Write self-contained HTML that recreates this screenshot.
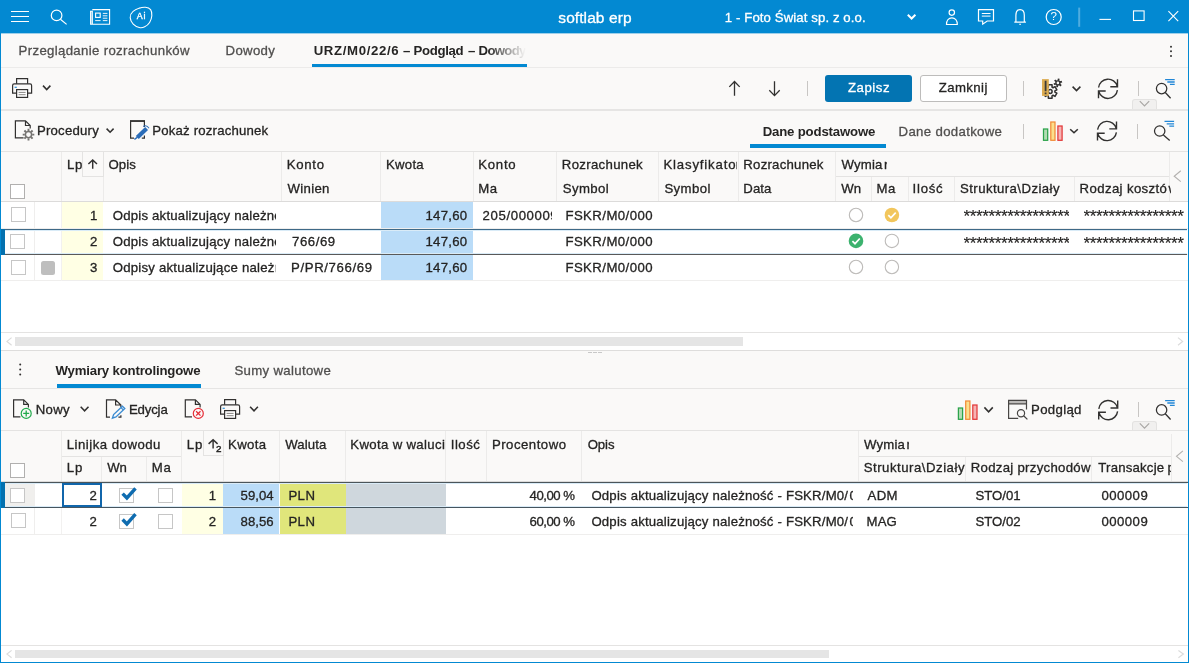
<!DOCTYPE html>
<html><head><meta charset="utf-8"><title>softlab erp</title>
<style>
html,body{margin:0;padding:0;background:#fff;}
body{width:1189px;height:663px;overflow:hidden;position:relative;font-family:"Liberation Sans",sans-serif;}
#app{will-change:transform;position:absolute;left:0;top:0;width:1189px;height:663px;overflow:hidden;background:#fff;}
.t{position:absolute;white-space:pre;line-height:1;font-size:14px;color:#1f1e1d;}
.b{position:absolute;}
.hl{position:absolute;height:1px;background:#e4e3e2;}
.vl{position:absolute;width:1px;background:#ecebea;}
.cb{position:absolute;width:13px;height:13px;border:1px solid #c6c6c6;background:#fff;box-sizing:content-box;}
svg{position:absolute;overflow:visible;}
.sep{position:absolute;width:1px;background:#c8c6c4;}
</style></head><body><div id="app">

<!-- ===== window frame / backgrounds ===== -->
<div class="b" style="left:0;top:0;width:1189px;height:33px;background:#0389d2;"></div>
<div class="b" style="left:1px;top:33px;width:1187px;height:118px;background:#faf9f8;"></div>
<div class="hl" style="left:1px;top:33px;width:1187px;background:#9fd0ea;"></div>
<div class="hl" style="left:1px;top:67px;width:1187px;background:#ecebea;"></div>
<div class="hl" style="left:1px;top:109px;width:1187px;height:2px;background:#e6e5e4;"></div>

<!-- main tab underline -->
<div class="b" style="left:312px;top:64px;width:215px;height:3px;background:#0389d2;"></div>
<!-- fade over active tab text -->
<div class="b" style="left:487px;top:40px;width:41px;height:23px;background:linear-gradient(90deg,rgba(250,249,248,0),#faf9f8 95%);z-index:5;"></div>

<!-- toolbar1 buttons -->
<div class="b" style="left:825px;top:75px;width:87px;height:27px;background:#0374b2;border-radius:3px;"></div>
<div class="b" style="left:920px;top:75px;width:85px;height:25px;background:#fff;border:1px solid #bdbcbb;border-radius:3px;"></div>
<div class="sep" style="left:807px;top:81px;height:15px;"></div>
<div class="sep" style="left:1023px;top:81px;height:15px;"></div>
<div class="sep" style="left:1138px;top:81px;height:15px;"></div>
<!-- small collapse widget -->
<div class="b" style="left:1132px;top:99px;width:23px;height:9px;background:#f1f0ef;border:1px solid #e3e2e1;border-bottom:none;border-radius:3px 3px 0 0;"></div>

<!-- toolbar2 -->
<div class="b" style="left:750px;top:144px;width:136px;height:4px;background:#0389d2;"></div>
<div class="sep" style="left:1023px;top:124px;height:15px;"></div>
<div class="sep" style="left:1137px;top:124px;height:15px;"></div>

<!-- ===== GRID 1 ===== -->
<div class="b" style="left:1px;top:151px;width:1187px;height:51px;background:#faf9f8;"></div>
<div class="hl" style="left:1px;top:151px;width:1187px;"></div>
<div class="hl" style="left:1px;top:201px;width:1187px;background:#dcdbda;"></div>
<div class="hl" style="left:835px;top:176px;width:335px;"></div>
<!-- header col separators -->
<div class="vl" style="left:61px;top:152px;height:49px;"></div>
<div class="vl" style="left:103px;top:152px;height:49px;"></div>
<div class="vl" style="left:281px;top:152px;height:49px;"></div>
<div class="vl" style="left:380px;top:152px;height:49px;"></div>
<div class="vl" style="left:473px;top:152px;height:49px;"></div>
<div class="vl" style="left:556px;top:152px;height:49px;"></div>
<div class="vl" style="left:658px;top:152px;height:49px;"></div>
<div class="vl" style="left:738px;top:152px;height:49px;"></div>
<div class="vl" style="left:835px;top:152px;height:49px;"></div>
<div class="vl" style="left:871px;top:177px;height:24px;"></div>
<div class="vl" style="left:908px;top:177px;height:24px;"></div>
<div class="vl" style="left:954px;top:177px;height:24px;"></div>
<div class="vl" style="left:1074px;top:177px;height:24px;"></div>
<div class="vl" style="left:1169px;top:152px;height:49px;"></div>
<!-- Lp sort box -->
<div class="b" style="left:82px;top:152px;width:20px;height:24px;border:1px solid #e4e3e2;border-top:none;background:#faf9f8;"></div>
<!-- rows -->
<div class="b" style="left:62px;top:202px;width:41px;height:79px;background:#ffffe4;"></div>
<div class="b" style="left:381px;top:202px;width:92px;height:79px;background:#badcf8;"></div>
<div class="hl" style="left:1px;top:228px;width:1187px;background:#efeeed;"></div>
<div class="hl" style="left:1px;top:254px;width:1187px;background:#efeeed;"></div>
<div class="hl" style="left:1px;top:280px;width:1187px;background:#efeeed;"></div>
<div class="vl" style="left:34px;top:202px;height:79px;background:#efeeed;"></div>
<div class="vl" style="left:61px;top:202px;height:79px;background:#f2f1f0;"></div>
<!-- selected row 2 -->
<div class="hl" style="left:1px;top:229px;width:1186px;background:#3e6987;"></div>
<div class="hl" style="left:5px;top:230px;width:1182px;background:#d9ebf7;"></div>
<div class="hl" style="left:5px;top:253px;width:1182px;background:#d9ebf7;"></div>
<div class="hl" style="left:1px;top:254px;width:1186px;background:#595959;"></div>
<div class="b" style="left:1px;top:229px;width:4px;height:26px;background:#0471af;"></div>
<!-- checkboxes -->
<div class="cb" style="left:10px;top:184px;border-color:#b1b0af;"></div>
<div class="cb" style="left:11px;top:207px;"></div>
<div class="cb" style="left:10px;top:234px;"></div>
<div class="cb" style="left:11px;top:260px;"></div>
<div class="b" style="left:41px;top:261px;width:14px;height:14px;background:#bebebe;border-radius:2.5px;"></div>
<!-- right fixed panel -->
<div class="b" style="left:1171px;top:152px;width:17px;height:49px;background:#faf9f8;"></div>
<!-- scrollbar 1 -->
<div class="hl" style="left:1px;top:332px;width:1187px;"></div>
<div class="b" style="left:15px;top:337px;width:728px;height:9px;background:#e5e5e5;"></div>
<div class="hl" style="left:1px;top:350px;width:1187px;background:#dedddc;"></div>

<!-- ===== lower panel ===== -->
<div class="b" style="left:1px;top:351px;width:1187px;height:131px;background:#faf9f8;"></div>
<div class="hl" style="left:1px;top:388px;width:1187px;background:#e6e5e4;"></div>
<div class="b" style="left:57px;top:384px;width:144px;height:4px;background:#0389d2;"></div>
<div class="b" style="left:588px;top:352px;width:4px;height:1px;background:#c8c8c8;"></div>
<div class="b" style="left:593px;top:352px;width:4px;height:1px;background:#c8c8c8;"></div>
<div class="b" style="left:598px;top:352px;width:4px;height:1px;background:#c8c8c8;"></div>
<div class="sep" style="left:1138px;top:402px;height:15px;"></div>
<div class="b" style="left:1132px;top:421px;width:23px;height:8px;background:#f1f0ef;border:1px solid #e3e2e1;border-bottom:none;border-radius:3px 3px 0 0;"></div>

<!-- ===== GRID 2 ===== -->
<div class="hl" style="left:1px;top:430px;width:1187px;"></div>
<div class="hl" style="left:1px;top:481px;width:1187px;background:#dcdbda;"></div>
<div class="hl" style="left:62px;top:456px;width:120px;"></div>
<div class="hl" style="left:859px;top:456px;width:312px;"></div>
<div class="vl" style="left:61px;top:431px;height:50px;"></div>
<div class="vl" style="left:101px;top:457px;height:24px;"></div>
<div class="vl" style="left:146px;top:457px;height:24px;"></div>
<div class="vl" style="left:181px;top:431px;height:50px;"></div>
<div class="vl" style="left:223px;top:431px;height:50px;"></div>
<div class="vl" style="left:279px;top:431px;height:50px;"></div>
<div class="vl" style="left:345px;top:431px;height:50px;"></div>
<div class="vl" style="left:445px;top:431px;height:50px;"></div>
<div class="vl" style="left:486px;top:431px;height:50px;"></div>
<div class="vl" style="left:581px;top:431px;height:50px;"></div>
<div class="vl" style="left:858px;top:431px;height:50px;"></div>
<div class="vl" style="left:965px;top:457px;height:24px;"></div>
<div class="vl" style="left:1091px;top:457px;height:24px;"></div>
<div class="vl" style="left:1171px;top:434px;height:47px;"></div>
<div class="b" style="left:203px;top:431px;width:19px;height:24px;border:1px solid #e4e3e2;border-top:none;background:#faf9f8;"></div>
<!-- rows -->
<div class="b" style="left:182px;top:482px;width:41px;height:52px;background:#ffffe4;"></div>
<div class="b" style="left:223px;top:482px;width:56px;height:52px;background:#badcf8;"></div>
<div class="b" style="left:280px;top:482px;width:66px;height:52px;background:#e0e67b;"></div>
<div class="b" style="left:346px;top:482px;width:100px;height:52px;background:#cfd7dd;"></div>
<div class="b" style="left:5px;top:483px;width:29px;height:24px;background:#f0efed;"></div>
<div class="hl" style="left:1px;top:534px;width:1187px;background:#efeeed;"></div>
<div class="vl" style="left:34px;top:482px;height:52px;background:#efeeed;"></div>
<div class="vl" style="left:61px;top:508px;height:26px;background:#f2f1f0;"></div>
<div class="hl" style="left:1px;top:482px;width:1187px;background:#4b555a;"></div>
<div class="hl" style="left:5px;top:483px;width:1182px;background:#d9ebf7;"></div>
<div class="hl" style="left:5px;top:506px;width:1182px;background:#d9ebf7;"></div>
<div class="hl" style="left:1px;top:507px;width:1187px;background:#46555f;"></div>
<div class="b" style="left:1px;top:482px;width:4px;height:26px;background:#0471af;"></div>
<div class="b" style="left:62px;top:483px;width:36px;height:20px;border:2px solid #1166ab;background:#fff;"></div>
<div class="cb" style="left:10px;top:463px;border-color:#b1b0af;"></div>
<div class="cb" style="left:10px;top:488px;"></div>
<div class="cb" style="left:11px;top:513px;"></div>
<div class="cb" style="left:119px;top:488px;"></div>
<div class="cb" style="left:119px;top:514px;"></div>
<div class="cb" style="left:158px;top:488px;"></div>
<div class="cb" style="left:158px;top:514px;"></div>
<div class="b" style="left:1172px;top:431px;width:16px;height:50px;background:#faf9f8;"></div>
<!-- scrollbar 2 -->
<div class="hl" style="left:1px;top:645px;width:1187px;"></div>
<div class="b" style="left:15px;top:650px;width:814px;height:8px;background:#e5e5e5;"></div>

<!-- ===== title bar icons ===== -->
<svg style="left:0;top:0" width="1189" height="33" viewBox="0 0 1189 33" fill="none" stroke="#fff" stroke-width="1.2">
<!-- hamburger -->
<path d="M11 11.5H29M11 16.5H29M11 21.5H29" stroke-width="1.1"/>
<!-- search -->
<circle cx="56.6" cy="15.4" r="5.3"/><path d="M60.4 19.3L66.6 24.4"/>
<!-- newspaper -->
<path d="M92.3 9.6H109.6V24.2H90.6V11.2H92.3V24.2" stroke-width="1.1"/>
<rect x="95.6" y="13.1" width="4.6" height="4.3" stroke-width="1.1"/>
<path d="M102.8 13.4H107.4M102.8 15.8H107.4M102.8 18.2H107.4M95.2 20.6H100.6M102.8 20.6H107.4" stroke-width="1" stroke-opacity=".9"/><rect x="90.6" y="11.2" width="1.7" height="13" fill="#fff" fill-opacity=".35" stroke="none"/>
<!-- AI -->
<path d="M139.3 8.3C142.8 6.7 148.4 6.6 150.6 9.6C152.7 12.6 152.1 18.6 149.6 22.5C147 26.5 142.6 28.3 139.3 27.5C134.9 26.4 130.5 22.6 130.2 17.6C130 13.3 134 9.7 140.2 7.8" stroke-width="1.1"/>
<!-- company dropdown chevron -->
<path d="M907.8 14.8L911.6 18.5L915.4 14.8" stroke-width="2"/>
<!-- person -->
<circle cx="951.8" cy="12.6" r="2.7"/>
<path d="M946.5 24.5C946.5 20.6 948.7 17.9 951.9 17.9C955.1 17.9 957.3 20.6 957.3 24.5Z"/>
<!-- chat -->
<path d="M978.5 9.6H993.5V21H987.2L982.7 24.2V21H978.5Z"/>
<path d="M981.8 13.5H990.5M981.8 16.1H990.5" stroke-width="1"/>
<!-- bell -->
<path d="M1014.3 22.2H1025.9M1015.9 22.2V15.2C1015.9 11.7 1017.7 9.6 1020.1 9.6C1022.5 9.6 1024.3 11.7 1024.3 15.2V22.2"/>
<path d="M1019.2 24.3H1021"  stroke-width="1.1"/>
<!-- help -->
<circle cx="1053.7" cy="17" r="7.5"/>
<!-- separator -->
<path d="M1079.2 7.6V26.8" stroke="#fff" stroke-opacity=".3" stroke-width="2"/>
<!-- min / max / close -->
<path d="M1099.4 19.4H1111" stroke-width="1.1"/>
<rect x="1133.5" y="10.9" width="10.6" height="9.6" stroke-width="1.1"/>
<path d="M1168.4 11.2L1178.2 21.1M1178.2 11.2L1168.4 21.1" stroke-width="1.1"/>
</svg>
<span class="t" style="left:136.8px;top:12.3px;font-size:8.9px;color:#fff;letter-spacing:0.7px;-webkit-text-stroke:0.35px;">Ai</span>
<span class="t" style="left:1050.6px;top:11.4px;font-size:11.5px;color:#fff;">?</span>

<svg style="left:0;top:68px" width="1189" height="42" viewBox="0 68 1189 42" fill="none">
<path d="M16.6 83.8V78.6H27.6V83.8" stroke="#323130" stroke-width="1.2" fill="none"/><path d="M16.6 93.2H12.6V85.4Q12.6 83.8 14.2 83.8H30Q31.6 83.8 31.6 85.4V93.2H27.6" stroke="#323130" stroke-width="1.2" fill="none"/><rect x="16.6" y="89.6" width="11" height="7.8" stroke="#323130" stroke-width="1.2" fill="#fff"/><path d="M18.6 92.4H25.6M18.6 94.7H25.6" stroke="#8a8886" stroke-width="1" fill="none"/><path d="M14.6 87.3H16.8" stroke="#2f8fd6" stroke-width="1.2" fill="none"/>
<path d="M43 85.6L46.7 89.6L50.4 85.6" stroke="#323130" stroke-width="1.55" fill="none"/>
<path d="M734.5 95.8V81.6M729.3 86.9L734.5 81.5L739.7 86.9" stroke="#323130" stroke-width="1.3"/>
<path d="M774.5 81.3V95.5M769.3 90.2L774.5 95.6L779.7 90.2" stroke="#323130" stroke-width="1.3"/>
<path d="M1048.36 87.18L1048.34 84.85L1052.06 84.85L1052.04 87.18L1053.02 87.74L1055.03 86.57L1056.88 89.79L1054.87 90.93L1054.87 92.07L1056.88 93.21L1055.03 96.43L1053.02 95.26L1052.04 95.82L1052.06 98.15L1048.34 98.15L1048.36 95.82L1047.38 95.26L1045.37 96.43L1043.52 93.21L1045.53 92.07L1045.53 90.93L1043.52 89.79L1045.37 86.57L1047.38 87.74Z" stroke="#323130" stroke-width="1.5" stroke-linejoin="round"/><circle cx="1050.2" cy="91.5" r="1.9" stroke="#323130" stroke-width="1.5"/>
<circle cx="1057.9" cy="82.9" r="2.50" fill="#faf9f8"/><path d="M1058.34 80.74L1058.75 78.69M1059.99 82.20L1061.98 81.53M1059.55 84.36L1061.12 85.75M1057.46 85.06L1057.05 87.11M1055.81 83.60L1053.82 84.27M1056.25 81.44L1054.68 80.05" stroke="#323130" stroke-width="1.8" fill="none"/><circle cx="1057.9" cy="82.9" r="2.0" stroke="#323130" stroke-width="1.4" fill="#faf9f8"/>
<rect x="1042" y="79.1" width="6.8" height="16.8" fill="#dcac52"/>
<path d="M1045.6 80.8V91.2M1045.6 92.5V94.3" stroke="#3b3a39" stroke-width="1.8"/>
<path d="M1072.6 86.6L1076.5 90.6L1080.4 86.6" stroke="#323130" stroke-width="1.55" fill="none"/>
<path d="M1098.6 87.5A9.5 9.5 0 0 1 1117.2 86.2M1117.5 79.3V86.7H1110.3M1117.4 90.1A9.5 9.5 0 0 1 1098.8 91.4M1098.5 98.3V91.0H1105.7" stroke="#323130" stroke-width="1.4" fill="none"/>
<circle cx="1161.6" cy="88.6" r="5.2" stroke="#323130" stroke-width="1.25" fill="none"/><path d="M1165.3 92.5L1170.6 98.3" stroke="#323130" stroke-width="1.3" fill="none"/><path d="M1165.1 79.6H1174.7M1167.3 82.0H1174.7M1169.9 84.4H1174.7" stroke="#2287d6" stroke-width="1.3" fill="none"/>
<path d="M1139.8 101.2L1144.5 106L1149.2 101.2" stroke="#a9a7a5" stroke-width="1.2" fill="none"/>
</svg>
<svg style="left:1165px;top:40px" width="12" height="22" viewBox="1165 40 12 22"><circle cx="1171" cy="46.7" r="1" fill="#323130"/><circle cx="1171" cy="51.3" r="1" fill="#323130"/><circle cx="1171" cy="55.9" r="1" fill="#323130"/></svg>

<svg style="left:0;top:111px" width="1189" height="40" viewBox="0 111 1189 40" fill="none">
<path d="M23.6 137.9H15.4V120.9H25.5L30.2 125.5V128.6M25.5 120.9V125.5H30.2" stroke="#323130" stroke-width="1.2" fill="none"/>
<circle cx="28.5" cy="134.6" r="4.00" fill="#faf9f8"/><path d="M28.50 130.90L28.50 128.80M31.12 131.98L32.60 130.50M32.20 134.60L34.30 134.60M31.12 137.22L32.60 138.70M28.50 138.30L28.50 140.40M25.88 137.22L24.40 138.70M24.80 134.60L22.70 134.60M25.88 131.98L24.40 130.50" stroke="#757371" stroke-width="1.9" fill="none"/><circle cx="28.5" cy="134.6" r="3.1" stroke="#757371" stroke-width="1.5" fill="#faf9f8"/>
<path d="M106.6 128.6L110.1 132.2L113.6 128.6" stroke="#323130" stroke-width="1.55" fill="none"/>
<path d="M134 138.1H130.6V121.2H144.4V127M144.4 135.4V138.1H141.8" stroke="#323130" stroke-width="1.2"/><path d="M130 121H145" stroke="#323130" stroke-width="1.6"/>
<path d="M137.3 137.4L146.6 128.4" stroke="#2a6cb8" stroke-width="4.2"/><path d="M134.4 139.4L137.6 137.2" stroke="#2a6cb8" stroke-width="1.4"/>
<path d="M143.2 126.4Q146.6 124.6 149 128.2" stroke="#2a6cb8" stroke-width="1.1"/>
<rect x="1043.5" y="129.0" width="4.2" height="11.3" fill="#b3dcb4" stroke="#2ba34a" stroke-width="1.25"/><rect x="1050.8" y="122.0" width="4.2" height="18.3" fill="#fbe08c" stroke="#f28c38" stroke-width="1.25"/><rect x="1057.9" y="126.0" width="4.2" height="14.3" fill="#f6b4b4" stroke="#e23a3a" stroke-width="1.25"/>
<path d="M1070.2 129.2L1074.0 132.8L1077.8 129.2" stroke="#323130" stroke-width="1.55" fill="none"/>
<path d="M1097.6 129.7A9.5 9.5 0 0 1 1116.2 128.4M1116.5 121.5V128.9H1109.3M1116.4 132.3A9.5 9.5 0 0 1 1097.8 133.6M1097.5 140.5V133.2H1104.7" stroke="#323130" stroke-width="1.4" fill="none"/>
<circle cx="1159.7" cy="131" r="5.2" stroke="#323130" stroke-width="1.25" fill="none"/><path d="M1163.4 134.9L1169.7 140.5" stroke="#323130" stroke-width="1.3" fill="none"/><path d="M1164.5 121.4H1174.1M1166.7 123.8H1174.1M1169.3 126.2H1174.1" stroke="#2287d6" stroke-width="1.3" fill="none"/>
</svg>

<svg style="left:0;top:151px" width="1189" height="200" viewBox="0 151 1189 200" fill="none">
<path d="M92.7 168.8V160.2M88.4 164L92.7 159.9L97 164" stroke="#323130" stroke-width="1.45"/>
<path d="M1180.8 170.8L1174.2 176.2L1180.8 181.6" stroke="#b3b1af" stroke-width="1.1"/>
<circle cx="856" cy="215" r="6.7" fill="#fff" stroke="#bdbbb9" stroke-width="1.1"/>
<circle cx="891.9" cy="215" r="7.3" fill="#f2c65c"/><path d="M888.3 215.2L890.9 217.8L895.7 212.6" stroke="#fff" stroke-width="1.7"/>
<circle cx="856" cy="240.9" r="7.3" fill="#3cb26e"/><path d="M852.4 241.1L855.0 243.7L859.8 238.5" stroke="#fff" stroke-width="1.7"/>
<circle cx="891.9" cy="240.9" r="6.7" fill="#fff" stroke="#bdbbb9" stroke-width="1.1"/>
<circle cx="856" cy="267" r="6.7" fill="#fff" stroke="#bdbbb9" stroke-width="1.1"/>
<circle cx="891.9" cy="267" r="6.7" fill="#fff" stroke="#bdbbb9" stroke-width="1.1"/>
<path d="M11.6 337.6L7 341.4L11.6 345.2" stroke="#dcdcdc" stroke-width="1.2"/>
<path d="M1178 337.6L1182.6 341.4L1178 345.2" stroke="#dcdcdc" stroke-width="1.2"/>
</svg>

<svg style="left:0;top:352px" width="1189" height="80" viewBox="0 352 1189 80" fill="none">
<circle cx="20.2" cy="364.6" r="1" fill="#323130"/><circle cx="20.2" cy="369.6" r="1" fill="#323130"/><circle cx="20.2" cy="374.6" r="1" fill="#323130"/>
<path d="M20.4 416.8H13.6V399.8H23.7L28.4 404.4V407.6M23.7 399.8V404.4H28.4" stroke="#323130" stroke-width="1.2" fill="none"/>
<circle cx="26.2" cy="413.4" r="5" stroke="#22aa4c" stroke-width="1.2" fill="#faf9f8"/><path d="M23.2 413.4H29.2M26.2 410.4V416.4" stroke="#22aa4c" stroke-width="1.3"/>
<path d="M80.7 406.8L84.6 410.9L88.5 406.8" stroke="#323130" stroke-width="1.55" fill="none"/>
<path d="M110 417.1H106.5V399.8H115.6L120.9 405V407.2M115.6 399.8V405H120.9M118.4 417.1H120.9V415.2" stroke="#323130" stroke-width="1.2"/>
<path d="M112.4 418.2L113.6 414.6L122.4 406.2L124.8 408.6L116 417Z" stroke="#3c8cd2" stroke-width="1.35" fill="#faf9f8"/><path d="M121 407.6L123.4 410" stroke="#3c8cd2" stroke-width="1.1"/>
<path d="M192.0 416.8H185.3V399.8H195.4L200.1 404.4V407.4M195.4 399.8V404.4H200.1" stroke="#323130" stroke-width="1.2" fill="none"/>
<circle cx="198.3" cy="413.4" r="5" stroke="#e62d37" stroke-width="1.2" fill="#faf9f8"/><path d="M196.1 411.2L200.5 415.6M200.5 411.2L196.1 415.6" stroke="#e62d37" stroke-width="1.3"/>
<path d="M224.6 404.8V399.6H235.6V404.8" stroke="#323130" stroke-width="1.2" fill="none"/><path d="M224.6 414.2H220.6V406.4Q220.6 404.8 222.2 404.8H238Q239.6 404.8 239.6 406.4V414.2H235.6" stroke="#323130" stroke-width="1.2" fill="none"/><rect x="224.6" y="410.6" width="11" height="7.8" stroke="#323130" stroke-width="1.2" fill="#fff"/><path d="M226.6 413.4H233.6M226.6 415.7H233.6" stroke="#8a8886" stroke-width="1" fill="none"/><path d="M222.6 408.3H224.8" stroke="#2f8fd6" stroke-width="1.2" fill="none"/>
<path d="M250.1 406.8L254.0 410.9L257.9 406.8" stroke="#323130" stroke-width="1.55" fill="none"/>
<rect x="958.4" y="408.0" width="4.2" height="11.3" fill="#b3dcb4" stroke="#2ba34a" stroke-width="1.25"/><rect x="965.7" y="401.0" width="4.2" height="18.3" fill="#fbe08c" stroke="#f28c38" stroke-width="1.25"/><rect x="972.8" y="405.0" width="4.2" height="14.3" fill="#f6b4b4" stroke="#e23a3a" stroke-width="1.25"/>
<path d="M984.4 407.4L988.5999999999999 411.9L992.8 407.4" stroke="#323130" stroke-width="1.55" fill="none"/>
<rect x="1008.4" y="400.2" width="18.2" height="3.4" fill="#bdbbb9"/>
<path d="M1018.2 418.3H1008.6V400.4H1026.5V409.4M1008.6 403.8H1026.5" stroke="#484644" stroke-width="1.2"/>
<circle cx="1021" cy="413.2" r="3.6" stroke="#484644" stroke-width="1.2" fill="#faf9f8"/><path d="M1023.6 415.8L1027.4 419.4" stroke="#484644" stroke-width="1.3"/>
<path d="M1098.8 408.8A9.5 9.5 0 0 1 1117.4 407.5M1117.7 400.6V408.0H1110.5M1117.6 411.4A9.5 9.5 0 0 1 1099.0 412.7M1098.7 419.6V412.3H1105.9" stroke="#323130" stroke-width="1.4" fill="none"/>
<circle cx="1161.6" cy="409.9" r="5.2" stroke="#323130" stroke-width="1.25" fill="none"/><path d="M1165.3 413.8L1170.6 419.5" stroke="#323130" stroke-width="1.3" fill="none"/><path d="M1165.1 400.6H1174.7M1167.3 403.0H1174.7M1169.9 405.4H1174.7" stroke="#2287d6" stroke-width="1.3" fill="none"/>
<path d="M1139.8 423.4L1144.5 428.2L1149.2 423.4" stroke="#a9a7a5" stroke-width="1.2" fill="none"/>
</svg>

<svg style="left:0;top:431px" width="1189" height="232" viewBox="0 431 1189 232" fill="none">
<path d="M213.1 448.6V440M208.6 443.9L213.1 439.7L217.6 443.9" stroke="#323130" stroke-width="1.45"/>
<path d="M1182.9 450.9L1176.5 456.3L1182.9 461.7" stroke="#b3b1af" stroke-width="1.1"/>
<path d="M122.6 493.6L126.9 498.0L135.5 488.3" stroke="#0f6cb0" stroke-width="3.4"/>
<path d="M122.6 519.5L126.9 523.9L135.5 514.2" stroke="#0f6cb0" stroke-width="3.4"/>
<path d="M11.6 650.4L7 654.1L11.6 657.8" stroke="#dcdcdc" stroke-width="1.2"/>
<path d="M1178.4 650.4L1183.4 654.1L1178.4 657.8" stroke="#dcdcdc" stroke-width="1.2"/>
</svg>
<span class="t" style="left:215.9px;top:443.9px;font-size:9.8px;color:#1f1e1d;-webkit-text-stroke:0.45px;">2</span>


<span class="t" style="top:9.78px;font-size:15.5px;letter-spacing:0.083px;color:#ffffff;-webkit-text-stroke:0.3px;left:558.30px;">softlab erp</span>
<span class="t" style="top:10.53px;font-size:13.2px;letter-spacing:0.097px;color:#ffffff;-webkit-text-stroke:0.3px;left:724.80px;">1 - Foto Świat sp. z o.o.</span>
<span class="t" style="top:44.43px;font-size:13.2px;letter-spacing:0.341px;color:#504f4e;-webkit-text-stroke:0.3px;left:18.60px;">Przeglądanie rozrachunków</span>
<span class="t" style="top:44.43px;font-size:13.2px;letter-spacing:0.308px;color:#504f4e;-webkit-text-stroke:0.3px;left:225.60px;">Dowody</span>
<span class="t" style="top:44.43px;font-size:13.2px;letter-spacing:0.651px;color:#252423;font-weight:700;left:313.70px;">URZ/M0/22/6</span>
<span class="t" style="top:44.43px;font-size:13.2px;letter-spacing:0px;color:#252423;font-weight:700;left:403.00px;">–</span>
<span class="t" style="top:44.43px;font-size:13.2px;letter-spacing:-0.346px;color:#252423;font-weight:700;left:413.60px;">Podgląd</span>
<span class="t" style="top:44.43px;font-size:13.2px;letter-spacing:0px;color:#252423;font-weight:700;left:468.10px;">–</span>
<span class="t" style="top:44.43px;font-size:13.2px;letter-spacing:-0.693px;color:#252423;font-weight:700;left:478.60px;">Dowody</span>
<span class="t" style="top:81.43px;font-size:13.2px;letter-spacing:0.57px;color:#ffffff;-webkit-text-stroke:0.3px;left:847.90px;">Zapisz</span>
<span class="t" style="top:81.43px;font-size:13.2px;letter-spacing:0.426px;color:#252423;-webkit-text-stroke:0.3px;left:938.70px;">Zamknij</span>
<span class="t" style="top:123.63px;font-size:13.2px;letter-spacing:0.223px;color:#252423;-webkit-text-stroke:0.3px;left:36.90px;">Procedury</span>
<span class="t" style="top:123.63px;font-size:13.2px;letter-spacing:0.194px;color:#252423;-webkit-text-stroke:0.3px;left:152.20px;">Pokaż rozrachunek</span>
<span class="t" style="top:125.23px;font-size:13.2px;letter-spacing:-0.172px;color:#252423;font-weight:700;left:762.70px;">Dane podstawowe</span>
<span class="t" style="top:125.23px;font-size:13.2px;letter-spacing:0.335px;color:#504f4e;-webkit-text-stroke:0.3px;left:898.60px;">Dane dodatkowe</span>
<span class="t" style="top:157.73px;font-size:13.2px;letter-spacing:0.862px;color:#252423;-webkit-text-stroke:0.3px;left:66.90px;">Lp</span>
<span class="t" style="top:157.73px;font-size:13.2px;letter-spacing:0.09px;color:#252423;-webkit-text-stroke:0.3px;left:108.40px;">Opis</span>
<span class="t" style="top:157.73px;font-size:13.2px;letter-spacing:0.716px;color:#252423;-webkit-text-stroke:0.3px;left:286.70px;">Konto</span>
<span class="t" style="top:182.03px;font-size:13.2px;letter-spacing:0.304px;color:#252423;-webkit-text-stroke:0.3px;left:287.60px;">Winien</span>
<span class="t" style="top:157.73px;font-size:13.2px;letter-spacing:0.245px;color:#252423;-webkit-text-stroke:0.3px;left:386.00px;">Kwota</span>
<span class="t" style="top:157.73px;font-size:13.2px;letter-spacing:0.716px;color:#252423;-webkit-text-stroke:0.3px;left:478.30px;">Konto</span>
<span class="t" style="top:182.03px;font-size:13.2px;letter-spacing:0.406px;color:#252423;-webkit-text-stroke:0.3px;left:478.30px;">Ma</span>
<span class="t" style="top:157.73px;font-size:13.2px;letter-spacing:0.319px;color:#252423;-webkit-text-stroke:0.3px;left:561.80px;">Rozrachunek</span>
<span class="t" style="top:182.03px;font-size:13.2px;letter-spacing:0.389px;color:#252423;-webkit-text-stroke:0.3px;left:562.80px;">Symbol</span>
<span class="t" style="top:157.73px;font-size:13.2px;letter-spacing:0.835px;color:#252423;-webkit-text-stroke:0.3px;left:663.40px;">Klasyfikato</span>
<span class="t" style="top:157.73px;font-size:13.2px;letter-spacing:0px;color:#252423;-webkit-text-stroke:0.3px;left:735.70px;width:1.70px;overflow:hidden;padding-bottom:4px;">r</span>
<span class="t" style="top:182.03px;font-size:13.2px;letter-spacing:0.389px;color:#252423;-webkit-text-stroke:0.3px;left:664.40px;">Symbol</span>
<span class="t" style="top:157.73px;font-size:13.2px;letter-spacing:0.239px;color:#252423;-webkit-text-stroke:0.3px;left:743.30px;">Rozrachunek</span>
<span class="t" style="top:182.03px;font-size:13.2px;letter-spacing:0.058px;color:#252423;-webkit-text-stroke:0.3px;left:743.30px;">Data</span>
<span class="t" style="top:157.73px;font-size:13.2px;letter-spacing:0.212px;color:#252423;-webkit-text-stroke:0.3px;left:841.40px;">Wymia</span>
<span class="t" style="top:157.73px;font-size:13.2px;letter-spacing:0px;color:#252423;-webkit-text-stroke:0.3px;left:884.10px;width:2.80px;overflow:hidden;padding-bottom:4px;">r</span>
<span class="t" style="top:182.03px;font-size:13.2px;letter-spacing:0.053px;color:#252423;-webkit-text-stroke:0.3px;left:841.20px;">Wn</span>
<span class="t" style="top:182.03px;font-size:13.2px;letter-spacing:0.506px;color:#252423;-webkit-text-stroke:0.3px;left:876.50px;">Ma</span>
<span class="t" style="top:182.03px;font-size:13.2px;letter-spacing:0.767px;color:#252423;-webkit-text-stroke:0.3px;left:912.50px;">Ilość</span>
<span class="t" style="top:182.03px;font-size:13.2px;letter-spacing:0.428px;color:#252423;-webkit-text-stroke:0.3px;left:960.00px;">Struktura\Działy</span>
<span class="t" style="top:182.03px;font-size:13.2px;letter-spacing:0.376px;color:#252423;-webkit-text-stroke:0.3px;left:1079.60px;">Rodzaj kosztó</span>
<span class="t" style="top:182.03px;font-size:13.2px;letter-spacing:0px;color:#252423;-webkit-text-stroke:0.3px;left:1168.40px;width:2.40px;overflow:hidden;padding-bottom:4px;">w</span>
<span class="t" style="top:208.73px;font-size:13.2px;letter-spacing:0px;color:#252423;-webkit-text-stroke:0.3px;right:1091.77px;">1</span>
<span class="t" style="top:208.73px;font-size:13.2px;letter-spacing:0.278px;color:#252423;-webkit-text-stroke:0.3px;right:721.59px;">147,60</span>
<span class="t" style="top:208.73px;font-size:13.2px;letter-spacing:0.431px;color:#252423;-webkit-text-stroke:0.3px;left:565.40px;width:87.20px;overflow:hidden;padding-bottom:4px;">FSKR/M0/000</span>
<span class="t" style="top:235.43px;font-size:13.2px;letter-spacing:0px;color:#252423;-webkit-text-stroke:0.3px;right:1091.77px;">2</span>
<span class="t" style="top:235.43px;font-size:13.2px;letter-spacing:0.278px;color:#252423;-webkit-text-stroke:0.3px;right:721.59px;">147,60</span>
<span class="t" style="top:235.43px;font-size:13.2px;letter-spacing:0.431px;color:#252423;-webkit-text-stroke:0.3px;left:565.40px;width:87.20px;overflow:hidden;padding-bottom:4px;">FSKR/M0/000</span>
<span class="t" style="top:261.43px;font-size:13.2px;letter-spacing:0px;color:#252423;-webkit-text-stroke:0.3px;right:1091.77px;">3</span>
<span class="t" style="top:261.43px;font-size:13.2px;letter-spacing:0.278px;color:#252423;-webkit-text-stroke:0.3px;right:721.59px;">147,60</span>
<span class="t" style="top:261.43px;font-size:13.2px;letter-spacing:0.431px;color:#252423;-webkit-text-stroke:0.3px;left:565.40px;width:87.20px;overflow:hidden;padding-bottom:4px;">FSKR/M0/000</span>
<span class="t" style="top:208.73px;font-size:13.2px;letter-spacing:0.211px;color:#252423;-webkit-text-stroke:0.3px;left:112.70px;width:163.30px;overflow:hidden;padding-bottom:4px;">Odpis aktualizujący należność</span>
<span class="t" style="top:235.43px;font-size:13.2px;letter-spacing:0.211px;color:#252423;-webkit-text-stroke:0.3px;left:112.70px;width:163.30px;overflow:hidden;padding-bottom:4px;">Odpis aktualizujący należność</span>
<span class="t" style="top:261.43px;font-size:13.2px;letter-spacing:0.218px;color:#252423;-webkit-text-stroke:0.3px;left:112.70px;">Odpisy aktualizujące należ</span>
<span class="t" style="top:261.43px;font-size:13.2px;letter-spacing:0px;color:#252423;-webkit-text-stroke:0.3px;left:274.90px;width:1.30px;overflow:hidden;padding-bottom:4px;">n</span>
<span class="t" style="top:235.43px;font-size:13.2px;letter-spacing:0.558px;color:#252423;-webkit-text-stroke:0.3px;left:292.00px;">766/69</span>
<span class="t" style="top:261.43px;font-size:13.2px;letter-spacing:0.635px;color:#252423;-webkit-text-stroke:0.3px;left:291.00px;">P/PR/766/69</span>
<span class="t" style="top:208.73px;font-size:13.2px;letter-spacing:0.611px;color:#252423;-webkit-text-stroke:0.3px;left:482.60px;">205/00000</span>
<span class="t" style="top:208.73px;font-size:13.2px;letter-spacing:0px;color:#252423;-webkit-text-stroke:0.3px;left:550.30px;width:1.30px;overflow:hidden;padding-bottom:4px;">9</span>
<span class="t" style="top:363.93px;font-size:13.2px;letter-spacing:-0.174px;color:#252423;font-weight:700;left:55.50px;">Wymiary kontrolingowe</span>
<span class="t" style="top:363.93px;font-size:13.2px;letter-spacing:0.323px;color:#504f4e;-webkit-text-stroke:0.3px;left:234.50px;">Sumy walutowe</span>
<span class="t" style="top:402.83px;font-size:13.2px;letter-spacing:0.27px;color:#252423;-webkit-text-stroke:0.3px;left:35.80px;">Nowy</span>
<span class="t" style="top:402.83px;font-size:13.2px;letter-spacing:-0.152px;color:#252423;-webkit-text-stroke:0.3px;left:128.90px;">Edycja</span>
<span class="t" style="top:402.83px;font-size:13.2px;letter-spacing:0.321px;color:#252423;-webkit-text-stroke:0.3px;left:1031.10px;">Podgląd</span>
<span class="t" style="top:437.63px;font-size:13.2px;letter-spacing:0.499px;color:#252423;-webkit-text-stroke:0.3px;left:66.70px;">Linijka dowodu</span>
<span class="t" style="top:461.03px;font-size:13.2px;letter-spacing:0.962px;color:#252423;-webkit-text-stroke:0.3px;left:66.80px;">Lp</span>
<span class="t" style="top:461.03px;font-size:13.2px;letter-spacing:-0.247px;color:#252423;-webkit-text-stroke:0.3px;left:107.30px;">Wn</span>
<span class="t" style="top:461.03px;font-size:13.2px;letter-spacing:0.806px;color:#252423;-webkit-text-stroke:0.3px;left:151.70px;">Ma</span>
<span class="t" style="top:437.63px;font-size:13.2px;letter-spacing:0.962px;color:#252423;-webkit-text-stroke:0.3px;left:186.80px;">Lp</span>
<span class="t" style="top:437.63px;font-size:13.2px;letter-spacing:0.37px;color:#252423;-webkit-text-stroke:0.3px;left:228.00px;">Kwota</span>
<span class="t" style="top:437.63px;font-size:13.2px;letter-spacing:0.074px;color:#252423;-webkit-text-stroke:0.3px;left:285.30px;">Waluta</span>
<span class="t" style="top:437.63px;font-size:13.2px;letter-spacing:0.336px;color:#252423;-webkit-text-stroke:0.3px;left:350.30px;width:95.20px;overflow:hidden;padding-bottom:4px;">Kwota w waluci</span>
<span class="t" style="top:437.63px;font-size:13.2px;letter-spacing:0.467px;color:#252423;-webkit-text-stroke:0.3px;left:450.80px;">Ilość</span>
<span class="t" style="top:437.63px;font-size:13.2px;letter-spacing:0.499px;color:#252423;-webkit-text-stroke:0.3px;left:491.90px;">Procentowo</span>
<span class="t" style="top:437.63px;font-size:13.2px;letter-spacing:-0.11px;color:#252423;-webkit-text-stroke:0.3px;left:587.70px;">Opis</span>
<span class="t" style="top:437.63px;font-size:13.2px;letter-spacing:0.212px;color:#252423;-webkit-text-stroke:0.3px;left:863.90px;">Wymia</span>
<span class="t" style="top:437.63px;font-size:13.2px;letter-spacing:0px;color:#252423;-webkit-text-stroke:0.3px;left:906.60px;width:2.80px;overflow:hidden;padding-bottom:4px;">r</span>
<span class="t" style="top:461.03px;font-size:13.2px;letter-spacing:0.514px;color:#252423;-webkit-text-stroke:0.3px;left:863.70px;width:101.30px;overflow:hidden;padding-bottom:4px;">Struktura\Działy</span>
<span class="t" style="top:461.03px;font-size:13.2px;letter-spacing:0.283px;color:#252423;-webkit-text-stroke:0.3px;left:970.80px;width:120.60px;overflow:hidden;padding-bottom:4px;">Rodzaj przychodów</span>
<span class="t" style="top:461.03px;font-size:13.2px;letter-spacing:0.202px;color:#252423;-webkit-text-stroke:0.3px;left:1098.30px;">Transakcje</span>
<span class="t" style="top:461.03px;font-size:13.2px;letter-spacing:0px;color:#252423;-webkit-text-stroke:0.3px;left:1167.60px;width:3.90px;overflow:hidden;padding-bottom:4px;">p</span>
<span class="t" style="top:489.13px;font-size:13.2px;letter-spacing:0px;color:#252423;-webkit-text-stroke:0.3px;right:1092.17px;">2</span>
<span class="t" style="top:489.13px;font-size:13.2px;letter-spacing:0px;color:#252423;-webkit-text-stroke:0.3px;right:972.97px;">1</span>
<span class="t" style="top:489.13px;font-size:13.2px;letter-spacing:0.03px;color:#252423;-webkit-text-stroke:0.3px;right:915.34px;">59,04</span>
<span class="t" style="top:489.13px;font-size:13.2px;letter-spacing:0.434px;color:#252423;-webkit-text-stroke:0.3px;left:288.40px;">PLN</span>
<span class="t" style="top:489.13px;font-size:13.2px;letter-spacing:-0.48px;color:#252423;-webkit-text-stroke:0.3px;right:614.45px;">40,00 %</span>
<span class="t" style="top:489.13px;font-size:13.2px;letter-spacing:0.191px;color:#252423;-webkit-text-stroke:0.3px;left:591.40px;">Odpis aktualizujący należność - FSKR/M0/</span>
<span class="t" style="top:489.13px;font-size:13.2px;letter-spacing:0px;color:#252423;-webkit-text-stroke:0.3px;left:849.40px;width:4.00px;overflow:hidden;padding-bottom:4px;">0</span>
<span class="t" style="top:489.13px;font-size:13.2px;letter-spacing:0.336px;color:#252423;-webkit-text-stroke:0.3px;left:867.60px;">ADM</span>
<span class="t" style="top:489.13px;font-size:13.2px;letter-spacing:-0.014px;color:#252423;-webkit-text-stroke:0.3px;left:975.50px;">STO/01</span>
<span class="t" style="top:489.13px;font-size:13.2px;letter-spacing:0.444px;color:#252423;-webkit-text-stroke:0.3px;left:1101.50px;">000009</span>
<span class="t" style="top:515.03px;font-size:13.2px;letter-spacing:0px;color:#252423;-webkit-text-stroke:0.3px;right:1092.17px;">2</span>
<span class="t" style="top:515.03px;font-size:13.2px;letter-spacing:0px;color:#252423;-webkit-text-stroke:0.3px;right:972.97px;">2</span>
<span class="t" style="top:515.03px;font-size:13.2px;letter-spacing:0.03px;color:#252423;-webkit-text-stroke:0.3px;right:915.34px;">88,56</span>
<span class="t" style="top:515.03px;font-size:13.2px;letter-spacing:0.434px;color:#252423;-webkit-text-stroke:0.3px;left:288.40px;">PLN</span>
<span class="t" style="top:515.03px;font-size:13.2px;letter-spacing:-0.48px;color:#252423;-webkit-text-stroke:0.3px;right:614.45px;">60,00 %</span>
<span class="t" style="top:515.03px;font-size:13.2px;letter-spacing:0.191px;color:#252423;-webkit-text-stroke:0.3px;left:591.40px;">Odpis aktualizujący należność - FSKR/M0/</span>
<span class="t" style="top:515.03px;font-size:13.2px;letter-spacing:0px;color:#252423;-webkit-text-stroke:0.3px;left:849.40px;width:4.00px;overflow:hidden;padding-bottom:4px;">0</span>
<span class="t" style="top:515.03px;font-size:13.2px;letter-spacing:0.105px;color:#252423;-webkit-text-stroke:0.3px;left:866.60px;">MAG</span>
<span class="t" style="top:515.03px;font-size:13.2px;letter-spacing:-0.014px;color:#252423;-webkit-text-stroke:0.3px;left:975.50px;">STO/02</span>
<span class="t" style="top:515.03px;font-size:13.2px;letter-spacing:0.444px;color:#252423;-webkit-text-stroke:0.3px;left:1101.50px;">000009</span>
<span class="t" style="top:208.01px;font-size:17px;letter-spacing:-0.37px;color:#252423;left:963.60px;width:105.20px;overflow:hidden;padding-bottom:4px;-webkit-text-stroke:0.15px;">*******************</span>
<span class="t" style="top:208.01px;font-size:17px;letter-spacing:-0.37px;color:#252423;left:1083.60px;width:100.20px;overflow:hidden;padding-bottom:4px;-webkit-text-stroke:0.15px;">*******************</span>
<span class="t" style="top:235.21px;font-size:17px;letter-spacing:-0.37px;color:#252423;left:963.60px;width:105.20px;overflow:hidden;padding-bottom:4px;-webkit-text-stroke:0.15px;">*******************</span>
<span class="t" style="top:235.21px;font-size:17px;letter-spacing:-0.37px;color:#252423;left:1083.60px;width:100.20px;overflow:hidden;padding-bottom:4px;-webkit-text-stroke:0.15px;">*******************</span>

<!-- window border -->
<div class="b" style="left:0;top:33px;width:1px;height:630px;background:#0389d2;"></div>
<div class="b" style="left:1188px;top:33px;width:1px;height:630px;background:#0389d2;"></div>
<div class="b" style="left:0;top:662px;width:1189px;height:1px;background:#0389d2;"></div>
</div></body></html>
